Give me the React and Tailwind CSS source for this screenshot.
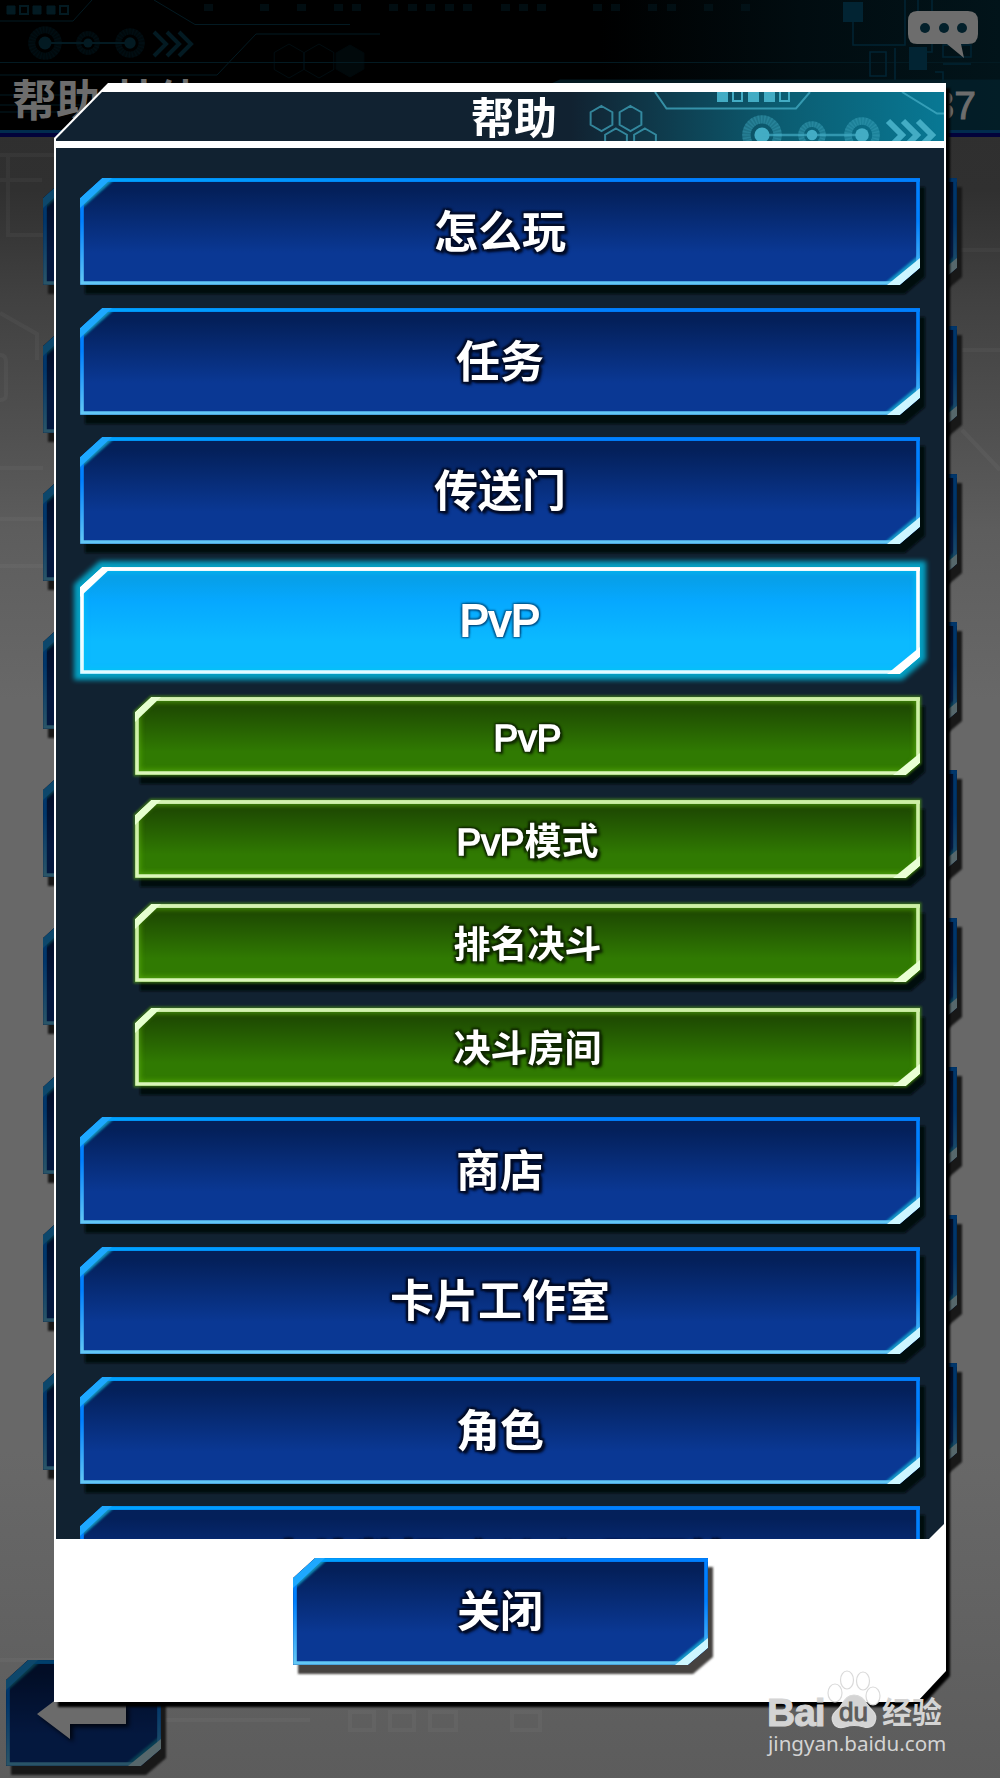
const CJK = "font-['Liberation_Sans','Noto_Sans_CJK_SC',sans-serif]";

const TONES = {
  blue: {
    edge: ["#00a6ff", "#0080ff", "#62c8f5"],
    fill: ["#04205a", "#0a3894"],
    glow: "#14b4d8",
    tl: "#1ea8ff",
    br: "#cdf6ff",
  },
  cyan: {
    edge: ["#ffffff", "#ffffff", "#e2fbff"],
    fill: ["#07a0ea", "#0bbaff"],
    glow: "#00c8f0",
    tl: "#ffffff",
    br: "#ffffff",
  },
  green: {
    edge: ["#d5f2b4", "#cdefa6", "#daf5ba"],
    fill: ["#1e4a02", "#307a02"],
    glow: "#62b810",
    tl: "#e6ffd0",
    br: "#e9ffd4",
  },
};

// Bevelled plate: top-left and bottom-right corners are cut
function Plate({ id, w, h, tone = "blue", shadow = "#06080c" }) {
  const t = TONES[tone];
  const cx = h > 90 ? 22 : 16;
  const cy = h > 90 ? 20 : 15;
  const outline = `M${cx} 0H${w}V${h - cy + 3}L${w - cx + 2} ${h}H0V${cy}Z`;
  const inner = `M${cx + 1} 2H${w - 2}V${h - cy + 2}L${w - cx + 1} ${h - 2}H2V${cy + 1}Z`;
  return (
    <svg
      className="absolute inset-0 overflow-visible"
      width={w}
      height={h}
      viewBox={`0 0 ${w} ${h}`}
    >
      <defs>
        <linearGradient id={`${id}-fill`} x1="0" y1="0" x2="0" y2="1">
          <stop offset="0.12" stopColor={t.fill[0]} />
          {tone === "cyan" && <stop offset="0.32" stopColor="#06a8ff" />}
          <stop offset="0.7" stopColor={t.fill[1]} />
        </linearGradient>
        <linearGradient id={`${id}-edge`} x1="0" y1="0" x2="0" y2="1">
          <stop offset="0" stopColor={t.edge[1]} />
          <stop offset="0.4" stopColor={t.edge[1]} />
          <stop offset="1" stopColor={t.edge[2]} />
        </linearGradient>
        <linearGradient id={`${id}-top`} gradientUnits="userSpaceOnUse" x1="0" y1="0" x2={w} y2="0">
          <stop offset="0" stopColor={t.edge[0]} />
          <stop offset="0.6" stopColor={t.edge[1]} />
        </linearGradient>
        <clipPath id={`${id}-clip`}>
          <path d={outline} />
        </clipPath>
        <filter id={`${id}-blur`} filterUnits="userSpaceOnUse" x="-30" y="-30" width={w + 60} height={h + 60}>
          <feGaussianBlur stdDeviation="2.5" />
        </filter>
        <filter id={`${id}-soft`} filterUnits="userSpaceOnUse" x="-30" y="-30" width={w + 60} height={h + 60}>
          <feGaussianBlur stdDeviation="1" />
        </filter>
      </defs>
      {tone !== "cyan" && (
        <path d={outline} transform="translate(5 9)" fill={shadow} filter={`url(#${id}-soft)`} />
      )}
      {tone === "cyan" && (
        <path d={outline} fill="none" stroke={t.glow} strokeWidth="12" opacity="0.75" filter={`url(#${id}-blur)`} />
      )}
      {tone === "green" && (
        <path d={outline} fill="none" stroke={t.glow} strokeWidth="3" opacity="0.5" filter={`url(#${id}-soft)`} />
      )}
      <path d={outline} fill={`url(#${id}-fill)`} />
      <g clipPath={`url(#${id}-clip)`}>
        {tone === "blue" ? (
          <>
            <path d={`M-4 ${cy + 11}L${cx + 9} 0`} stroke={t.glow} strokeWidth="7" opacity="0.75" filter={`url(#${id}-soft)`} />
            <path d={`M${w - cx - 10} ${h}L${w + 2} ${h - cy - 8}`} stroke={t.glow} strokeWidth="7" opacity="0.75" filter={`url(#${id}-soft)`} />
          </>
        ) : (
          <path d={inner} fill="none" stroke={t.glow} strokeWidth="7" opacity="0.6" filter={`url(#${id}-blur)`} />
        )}
        <path d={inner} fill="none" stroke={`url(#${id}-edge)`} strokeWidth="3.6" />
        <path d={`M${cx} 2H${w}`} stroke={`url(#${id}-top)`} strokeWidth="3.6" />
        <path d={`M0 ${cy}L${cx} 0H${cx + 10}L0 ${cy + 10}Z`} fill={t.tl} />
        <path d={`M${w} ${h - cy + 3}L${w - cx + 2} ${h}H${w - cx - 11}L${w} ${h - cy - 7}Z`} fill={t.br} />
      </g>
    </svg>
  );
}

function MenuButton({ id, label }) {
  return (
    <button className="relative flex h-[107px] w-[840px] shrink-0 items-center justify-center pt-[3px]">
      <Plate id={id} w={840} h={107} />
      <span className="relative whitespace-nowrap text-[44px] font-bold leading-none text-white [text-shadow:2px_2px_2px_#020c28,-2px_-2px_2px_#020c28,2px_-2px_2px_#020c28,-2px_2px_2px_#020c28,3px_3px_3px_#020c28]">
        {label}
      </span>
    </button>
  );
}

function SubButton({ id, latin, label }) {
  return (
    <button className="relative flex h-[78px] w-[785px] shrink-0 items-center justify-center pt-[6px]">
      <Plate id={id} w={785} h={78} tone="green" />
      <span className="relative whitespace-nowrap text-[37px] font-bold leading-none text-white [text-shadow:2px_2px_2px_#102800,-2px_-2px_2px_#102800,2px_-2px_2px_#102800,-2px_2px_2px_#102800,3px_3px_3px_#102800]">
        {latin && <span className="font-normal [-webkit-text-stroke:1.6px_white]">{latin}</span>}
        {label}
      </span>
    </button>
  );
}

function Ring({ cx, cy, r }) {
  return (
    <>
      <circle cx={cx} cy={cy} r={r * 0.78} fill="none" stroke="currentColor" strokeWidth={r * 0.42} opacity="0.35" />
      <circle cx={cx} cy={cy} r={r * 0.78} fill="none" stroke="currentColor" strokeWidth={r * 0.42} strokeDasharray="1.5 1.5" opacity="0.25" />
      <circle cx={cx} cy={cy} r={r * 0.38} fill="currentColor" />
    </>
  );
}

function hex(cx, cy, r) {
  const w = r * 0.87;
  return `M${cx} ${cy - r}l${w} ${r / 2}v${r}l${-w} ${r / 2}l${-w} ${-r / 2}v${-r}Z`;
}

function HeaderArt() {
  return (
    <svg className="absolute right-0 top-0 text-[#43acc4]" width="380" height="49" viewBox="565 92 380 49" fill="none" stroke="currentColor">
      <path d={`${hex(602.5, 118.5, 12.5)}${hex(631.5, 118.5, 12.5)}${hex(617, 141, 12.5)}${hex(646, 141, 12.5)}`} strokeWidth="2" opacity="0.7" />
      <path d="M656 92L667.500 108.500H797L811 92M903 92L938 113.500H945" strokeWidth="2" opacity="0.75" />
      <path d="M718 92h11v10h-11zM749 92h11v10h-11zM765 92h11v10h-11z" fill="currentColor" stroke="none" />
      <path d="M734 92v9h9v-9M781 92v9h9v-9" strokeWidth="2" />
      <g stroke="none">
        <Ring cx={763} cy={135} r={20} />
        <Ring cx={813} cy={135} r={14} />
        <Ring cx={863} cy={135} r={18} />
      </g>
      <path d="M763 135H863" strokeWidth="2.5" opacity="0.7" />
      <path d="M889 121l14 14-14 14M904 121l14 14-14 14M919 121l14 14-14 14" strokeWidth="6" />
    </svg>
  );
}

function TopBarArt() {
  return (
    <svg className="absolute inset-0 text-[#031a22]" width="1000" height="137" fill="none" stroke="currentColor">
      <path d="M7 6h8v8H7zM33 6h8v8h-8zM47 6h8v8h-8z" fill="currentColor" />
      <path d="M20 6h8v8h-8zM60 6h8v8h-8z" strokeWidth="2" />
      <path d="M0 21H73L92 0M154 0L195 24.500H350M0 75H217L256 34H380M0 62.500H1000M0 95H100M0 105H90M0 112H80" />
      <g stroke="none">
        <Ring cx={45} cy={43} r={17} />
        <Ring cx={88} cy={43} r={12} />
        <Ring cx={130} cy={43} r={15} />
      </g>
      <path d="M45 43H130" strokeWidth="2" />
      <path d="M154 32l12 12-12 12M167 32l12 12-12 12M179 32l12 12-12 12" strokeWidth="4" />
      <path d={`${hex(289, 61, 17)}${hex(319, 61, 17)}`} opacity="0.5" />
      <path d={hex(350, 61, 16)} fill="currentColor" opacity="0.35" />
      <g fill="currentColor" stroke="none" opacity="0.5">
        {[204, 260, 297, 334, 352, 389, 408, 426, 445, 463, 501, 519, 537, 593, 611, 648, 667, 704, 741].map((x) => (
          <rect key={x} x={x} y="4" width="9" height="7" />
        ))}
      </g>
      <g stroke="#022433">
        <path d="M843 2h20v20h-20zM909 47h18v23h-18z" fill="#022433" stroke="none" />
        <path d="M853 22V45H905V0M918 0V11M932 0V52H925M870 52h16v24h-16zM895 80V48M943 45h28v12h-28zM943 64h28M935 72h8v10" strokeWidth="1.6" />
      </g>
      <path d="M550 84L560 79.500H1000V131H550Z" fill="#04222c" stroke="none" opacity="0.75" />
    </svg>
  );
}

function TopBar() {
  return (
    <header className="relative h-[137px] w-full border-b-[4px] border-[#02023a] bg-[linear-gradient(90deg,#000_0%,#000_60%,#010c10_80%,#02141a_100%)]">
      <TopBarArt />
      <div className="absolute inset-x-0 bottom-0 h-[3px] bg-[#012b4d]" />
      <div className="relative flex items-start justify-between px-3 pt-[72px] text-[#6d6d6d]">
        <span className="whitespace-nowrap text-[44px] font-bold leading-[60px]">帮助/其他</span>
        <span className="pr-3 pt-[5px] text-[39px] leading-[58px] [-webkit-text-stroke:1px_#6d6d6d]">37</span>
      </div>
      <svg className="absolute right-[22px] top-[10px]" width="71" height="49" fill="#6d6d6d">
        <path d="M10 1H61Q71 1 71 11V24Q71 34 61 34H54L57 48L40 34H10Q1 34 1 24V11Q1 1 10 1Z" />
        <g fill="#03202b">
          <circle cx="18" cy="18" r="5" />
          <circle cx="37" cy="18" r="5" />
          <circle cx="55" cy="18" r="5" />
        </g>
      </svg>
    </header>
  );
}

// Faint circuit lines on the grey backdrop
function BackdropArt() {
  return (
    <svg className="absolute inset-0" width="1000" height="1778" fill="none" stroke="#fff" strokeWidth="4" opacity="0.03">
      <path d="M0 155H54M0 180H42M8 155V235H43M0 313L37 334V360M0 355Q6 355 6 362V395Q6 400 0 400M0 468H43M0 519H43M0 566H43M962 430L1000 470M962 350H1000M960 250H1000M0 1660H54" />
      <path d="M165 1720H310M350 1712h24v18h-24zM390 1712h24v18h-24zM430 1712h26v18h-26zM512 1712h28v18h-28z" />
    </svg>
  );
}

function BackButton() {
  return (
    <button className="absolute left-[6px] top-[1660px] h-[106px] w-[155px] brightness-[0.42]">
      <Plate id="back" w={155} h={106} shadow="#383838" />
      <svg className="absolute left-[31px] top-[27px] drop-shadow-[3px_3px_2px_#000c28]" width="90" height="54" fill="#fff">
        <path d="M0 27L33 2V17H89V37H33V52Z" />
      </svg>
    </button>
  );
}

function Watermark() {
  return (
    <div className="absolute left-[767px] top-[1670px] w-[180px] text-[#d4d4d4]">
      <div className="relative flex h-[62px] items-end font-bold leading-none">
        <span className="text-[39px] tracking-[-1px] [-webkit-text-stroke:1px_#d4d4d4]">Bai</span>
        <svg className="absolute left-[60px] top-0" width="56" height="60" fill="#fff" stroke="#dadada" strokeWidth="1.2">
          <ellipse cx="8" cy="23" rx="7" ry="9" />
          <ellipse cx="20" cy="10" rx="6.500" ry="9" />
          <ellipse cx="36" cy="11" rx="6.500" ry="9" />
          <ellipse cx="46" cy="26" rx="7" ry="9" />
          <path d="M27 25C37 25 39 35 45 40C53 48 47 60 37 57Q27 54 18 57C7 60 1 49 9 41C16 36 17 25 27 25Z" fill="#d4d4d4" />
        </svg>
        <span className="absolute left-[72px] top-[29px] text-[26px] font-normal text-[#5c5c5c] [-webkit-text-stroke:1px_#5c5c5c]">du</span>
        <span className="absolute left-[115px] top-[28px] text-[30px]">经验</span>
      </div>
      <div className="whitespace-nowrap pl-px font-['Noto_Sans',sans-serif] text-[20.6px] leading-[23px]">
        jingyan.baidu.com
      </div>
    </div>
  );
}

const BACKGROUND_ROWS = ["r0", "r1", "r2", "r3", "r4", "r5", "r6", "r7", "r8"];

const SUB_ITEMS = [
  { id: "sub0", latin: "PvP", label: "" },
  { id: "sub1", latin: "PvP", label: "模式" },
  { id: "sub2", latin: "", label: "排名决斗" },
  { id: "sub3", latin: "", label: "决斗房间" },
];

export default function App() {
  return (
    <div className={`relative h-[1778px] w-[1000px] overflow-hidden bg-[linear-gradient(180deg,#2d2d2d_0px,#303030_190px,#414141_300px,#505050_430px,#5d5d5d_530px,#686868_700px,#686868_1450px,#5c5c5c_1778px)] ${CJK}`}>
      <BackdropArt />
      <TopBar />
      <div className="flex flex-col items-center gap-[41.1px] pt-[41px] brightness-[0.42]">
        {BACKGROUND_ROWS.map((id) => (
          <div key={id} className="relative h-[107px] w-[914px]">
            <Plate id={id} w={914} h={107} shadow="#383838" />
          </div>
        ))}
      </div>
      <BackButton />

      {/* dialog */}
      <div className="absolute left-[54px] top-[83px] h-[1619px] w-[892px] [filter:drop-shadow(4px_5px_1px_#000)]">
        <div className="flex h-full flex-col bg-white px-[2px] pt-[9px] [clip-path:polygon(54px_0,100%_0,100%_1588px,863px_100%,0_100%,0_55px)]">
          <div className="relative flex h-[49px] shrink-0 items-center justify-center bg-[linear-gradient(90deg,#112231_0%,#112231_58%,#0b5d72_82%,#087894_100%)] pl-[28px] pt-[6px] [clip-path:polygon(46px_0,100%_0,100%_100%,0_100%,0_47px)]">
            <HeaderArt />
            <h1 className="relative text-[43px] font-bold leading-none text-white">帮助</h1>
          </div>
          <div className="mt-[7px] h-[1391px] shrink-0 overflow-hidden bg-[#112231] pl-[24px] pt-[30px] [clip-path:polygon(0_0,100%_0,100%_1376px,873px_100%,0_100%)]">
            <div className="flex flex-col gap-[22.67px]">
              <MenuButton id="how" label="怎么玩" />
              <MenuButton id="task" label="任务" />
              <MenuButton id="gate" label="传送门" />
              <button className="relative flex h-[107px] w-[840px] shrink-0 items-center justify-center pt-[2px]">
                <Plate id="pvp" w={840} h={107} tone="cyan" />
                <span className="relative text-[44px] leading-none text-white [-webkit-text-stroke:1.8px_white] [text-shadow:2px_2px_2px_#004a80,-2px_-2px_2px_#005a90,2px_-2px_2px_#005a90,-2px_2px_2px_#005a90]">
                  PvP
                </span>
              </button>
              <div className="mb-[9px] flex flex-col gap-[25.67px] pl-[55px]">
                {SUB_ITEMS.map((item) => (
                  <SubButton key={item.id} {...item} />
                ))}
              </div>
              <MenuButton id="shop" label="商店" />
              <MenuButton id="studio" label="卡片工作室" />
              <MenuButton id="role" label="角色" />
              <div className="[&_span]:top-[2px]">
                <MenuButton id="more" label="卡片数据/会议/问题回答" />
              </div>
            </div>
          </div>
          <div className="flex justify-center pt-[19px]">
            <button className="relative flex h-[107px] w-[415px] items-center justify-center pt-[2px]">
              <Plate id="close" w={415} h={107} shadow="#454340" />
              <span className="relative text-[43px] font-bold leading-none text-white [text-shadow:2px_2px_2px_#020c28,-2px_-2px_2px_#020c28,2px_-2px_2px_#020c28,-2px_2px_2px_#020c28,3px_3px_3px_#020c28]">
                关闭
              </span>
            </button>
          </div>
        </div>
      </div>
      <Watermark />
    </div>
  );
}
